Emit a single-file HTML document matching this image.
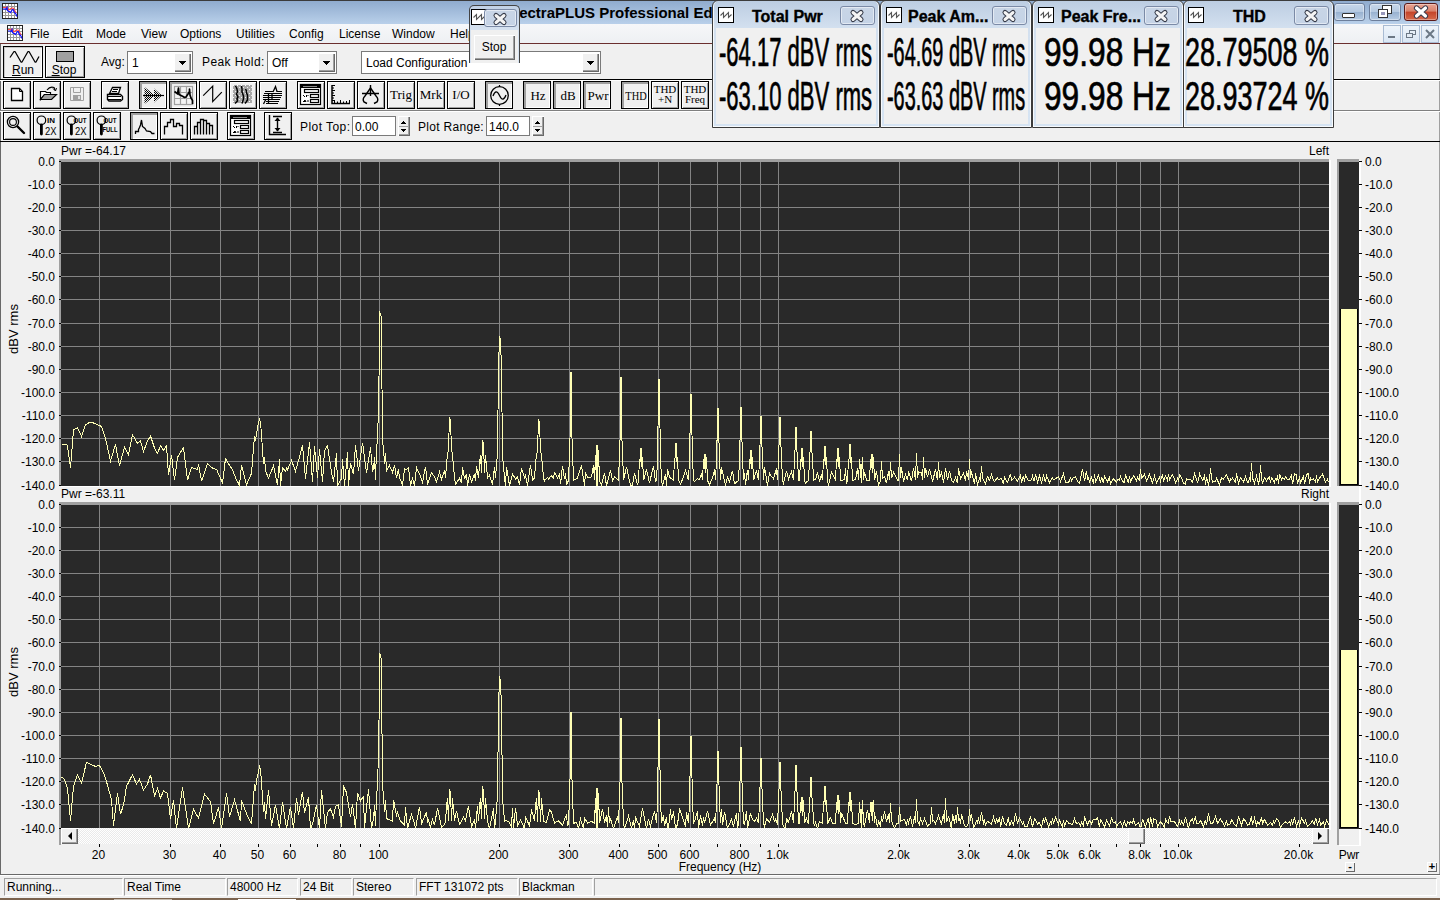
<!DOCTYPE html><html><head><meta charset="utf-8"><style>
*{margin:0;padding:0;box-sizing:border-box}
html,body{width:1440px;height:900px;overflow:hidden;background:#f0f0f0}
body{position:relative;font-family:"Liberation Sans",sans-serif;color:#000}
div{position:absolute}
.t{white-space:nowrap}
svg{position:absolute;left:0;top:0;overflow:visible}
u{text-decoration:underline}
</style></head><body><div style="left:0px;top:0px;width:1440px;height:24px;background:linear-gradient(#8eaacd,#b9d0ea);"></div>
<div style="left:0px;top:0px;width:1440px;height:1px;background:#3b3b3b;"></div>
<div class="t" style="left:500px;top:5.30px;font-size:15px;line-height:15px;font-weight:bold;">SpectraPLUS Professional Edition</div>
<div style="left:0px;top:24px;width:1440px;height:19px;background:linear-gradient(#f6f7f9,#eef0f3);"></div>
<div style="left:0px;top:43px;width:1440px;height:1px;background:#6b2f2f;"></div>
<div class="t" style="left:30px;top:27.84px;font-size:12px;line-height:12px;">File</div>
<div class="t" style="left:62px;top:27.84px;font-size:12px;line-height:12px;">Edit</div>
<div class="t" style="left:96px;top:27.84px;font-size:12px;line-height:12px;">Mode</div>
<div class="t" style="left:141px;top:27.84px;font-size:12px;line-height:12px;">View</div>
<div class="t" style="left:180px;top:27.84px;font-size:12px;line-height:12px;">Options</div>
<div class="t" style="left:236px;top:27.84px;font-size:12px;line-height:12px;">Utilities</div>
<div class="t" style="left:289px;top:27.84px;font-size:12px;line-height:12px;">Config</div>
<div class="t" style="left:339px;top:27.84px;font-size:12px;line-height:12px;">License</div>
<div class="t" style="left:392px;top:27.84px;font-size:12px;line-height:12px;">Window</div>
<div class="t" style="left:450px;top:27.84px;font-size:12px;line-height:12px;">Help</div>
<svg style="left:2px;top:3px" width="16" height="16" viewBox="0 0 16 16"><rect x="0.5" y="0.5" width="15" height="15" fill="#fff" stroke="#222"/><line x1="3.5" y1="1" x2="3.5" y2="15" stroke="#999"/><line x1="1" y1="3.5" x2="15" y2="3.5" stroke="#999"/><line x1="6.5" y1="1" x2="6.5" y2="15" stroke="#999"/><line x1="1" y1="6.5" x2="15" y2="6.5" stroke="#999"/><line x1="9.5" y1="1" x2="9.5" y2="15" stroke="#999"/><line x1="1" y1="9.5" x2="15" y2="9.5" stroke="#999"/><line x1="12.5" y1="1" x2="12.5" y2="15" stroke="#999"/><line x1="1" y1="12.5" x2="15" y2="12.5" stroke="#999"/><polyline points="1,4.5 4,4.5 5,4 6,6 7,7 8,6 10,5 11,5 12,6 13,8 14,10" fill="none" stroke="#f44" stroke-width="1.1"/><polyline points="1,6 3,6 4,6.5 5,4.5 5.5,7.5 6.5,8.5 7.5,8.5 8.5,9.5 9.5,8 10.5,6.5 11.5,7 12,9 13,10 14,11 15,13.5" fill="none" stroke="#11f" stroke-width="1.2"/></svg>
<svg style="left:7px;top:25px" width="16" height="16" viewBox="0 0 16 16"><rect x="0.5" y="0.5" width="15" height="15" fill="#fff" stroke="#222"/><line x1="3.5" y1="1" x2="3.5" y2="15" stroke="#999"/><line x1="1" y1="3.5" x2="15" y2="3.5" stroke="#999"/><line x1="6.5" y1="1" x2="6.5" y2="15" stroke="#999"/><line x1="1" y1="6.5" x2="15" y2="6.5" stroke="#999"/><line x1="9.5" y1="1" x2="9.5" y2="15" stroke="#999"/><line x1="1" y1="9.5" x2="15" y2="9.5" stroke="#999"/><line x1="12.5" y1="1" x2="12.5" y2="15" stroke="#999"/><line x1="1" y1="12.5" x2="15" y2="12.5" stroke="#999"/><polyline points="1,4.5 4,4.5 5,4 6,6 7,7 8,6 10,5 11,5 12,6 13,8 14,10" fill="none" stroke="#f44" stroke-width="1.1"/><polyline points="1,6 3,6 4,6.5 5,4.5 5.5,7.5 6.5,8.5 7.5,8.5 8.5,9.5 9.5,8 10.5,6.5 11.5,7 12,9 13,10 14,11 15,13.5" fill="none" stroke="#11f" stroke-width="1.2"/></svg>
<div style="left:0px;top:44px;width:1px;height:831px;background:#696969;"></div>
<div style="left:1439px;top:44px;width:1px;height:831px;background:#a0a0a0;"></div>
<div style="left:0px;top:79px;width:1440px;height:1px;background:#000;"></div>
<div style="left:0px;top:80px;width:1440px;height:1px;background:#fff;"></div>
<div style="left:0px;top:110px;width:1440px;height:1px;background:#808080;"></div>
<div style="left:0px;top:111px;width:1440px;height:1px;background:#fff;"></div>
<div style="left:0px;top:141px;width:1440px;height:1px;background:#000;"></div>
<div style="left:3px;top:46px;width:40px;height:32px;border:1px solid #000;background:#f0f0f0;box-shadow:inset 1px 1px 0 #fff,inset -1px -1px 0 #a0a0a0"></div>
<div style="left:4px;top:47px;width:38px;height:30px;box-shadow:inset 1px 1px 0 #c8c8c8,inset -1px -1px 0 #fff;background:#f0f0f0"></div>
<div class="t" style="left:-177px;width:400px;text-align:center;top:63.84px;font-size:12px;line-height:12px;"><u>R</u>un</div>
<div style="left:45px;top:46px;width:40px;height:32px;border:1px solid #000;background:#f0f0f0;box-shadow:inset 1px 1px 0 #fff,inset -1px -1px 0 #a0a0a0"></div>
<div style="left:56px;top:51px;width:18px;height:11px;background:#a0a0a0;border:1px solid #000"></div>
<div class="t" style="left:-136px;width:400px;text-align:center;top:63.84px;font-size:12px;line-height:12px;"><u>S</u>top</div>
<div class="t" style="left:101px;top:55.84px;font-size:12px;line-height:12px;">Avg:</div>
<div style="left:127px;top:51px;width:66px;height:23px;background:#fff;border:1px solid #7a7a7a;box-shadow:inset 1px 1px 0 #fff"></div>
<div class="t" style="left:132px;top:56.84px;font-size:12px;line-height:12px;">1</div>
<div style="left:174px;top:53px;width:17px;height:19px;background:#f0f0f0;box-shadow:inset 1px 1px 0 #fff,inset -1px -1px 0 #696969,inset -2px -2px 0 #a0a0a0"></div>
<svg style="left:178px;top:61px" width="8" height="5" viewBox="0 0 8 5" shape-rendering="crispEdges"><polygon points="0,0 8,0 4,4" fill="#000"/></svg>
<div class="t" style="left:202px;top:55.84px;font-size:12px;line-height:12px;letter-spacing:0.4px;">Peak Hold:</div>
<div style="left:267px;top:51px;width:70px;height:23px;background:#fff;border:1px solid #7a7a7a;box-shadow:inset 1px 1px 0 #fff"></div>
<div class="t" style="left:272px;top:56.84px;font-size:12px;line-height:12px;">Off</div>
<div style="left:318px;top:53px;width:17px;height:19px;background:#f0f0f0;box-shadow:inset 1px 1px 0 #fff,inset -1px -1px 0 #696969,inset -2px -2px 0 #a0a0a0"></div>
<svg style="left:322px;top:61px" width="8" height="5" viewBox="0 0 8 5" shape-rendering="crispEdges"><polygon points="0,0 8,0 4,4" fill="#000"/></svg>
<div style="left:361px;top:51px;width:240px;height:23px;background:#fff;border:1px solid #7a7a7a;box-shadow:inset 1px 1px 0 #fff"></div>
<div class="t" style="left:366px;top:56.84px;font-size:12px;line-height:12px;">Load Configuration</div>
<div style="left:582px;top:53px;width:17px;height:19px;background:#f0f0f0;box-shadow:inset 1px 1px 0 #fff,inset -1px -1px 0 #696969,inset -2px -2px 0 #a0a0a0"></div>
<svg style="left:586px;top:61px" width="8" height="5" viewBox="0 0 8 5" shape-rendering="crispEdges"><polygon points="0,0 8,0 4,4" fill="#000"/></svg>
<div style="left:3px;top:81px;width:28px;height:28px;border:1px solid #000;background:#f0f0f0;box-shadow:inset 1px 1px 0 #fff,inset -1px -1px 0 #a0a0a0"></div>
<div style="left:33px;top:81px;width:28px;height:28px;border:1px solid #000;background:#f0f0f0;box-shadow:inset 1px 1px 0 #fff,inset -1px -1px 0 #a0a0a0"></div>
<div style="left:63px;top:81px;width:28px;height:28px;border:1px solid #000;background:#f0f0f0;box-shadow:inset 1px 1px 0 #fff,inset -1px -1px 0 #a0a0a0"></div>
<div style="left:101px;top:81px;width:28px;height:28px;border:1px solid #000;background:#f0f0f0;box-shadow:inset 1px 1px 0 #fff,inset -1px -1px 0 #a0a0a0"></div>
<div style="left:139px;top:81px;width:28px;height:28px;border:1px solid #000;background:#f0f0f0;box-shadow:inset 2px 2px 0 #a0a0a0,inset -1px -1px 0 #fff"></div>
<div style="left:169px;top:81px;width:28px;height:28px;border:1px solid #000;background:#f0f0f0;box-shadow:inset 2px 2px 0 #a0a0a0,inset -1px -1px 0 #fff"></div>
<div style="left:199px;top:81px;width:28px;height:28px;border:1px solid #000;background:#f0f0f0;box-shadow:inset 1px 1px 0 #fff,inset -1px -1px 0 #a0a0a0"></div>
<div style="left:229px;top:81px;width:28px;height:28px;border:1px solid #000;background:#f0f0f0;box-shadow:inset 1px 1px 0 #fff,inset -1px -1px 0 #a0a0a0"></div>
<div style="left:259px;top:81px;width:28px;height:28px;border:1px solid #000;background:#f0f0f0;box-shadow:inset 1px 1px 0 #fff,inset -1px -1px 0 #a0a0a0"></div>
<div style="left:297px;top:81px;width:28px;height:28px;border:1px solid #000;background:#f0f0f0;box-shadow:inset 1px 1px 0 #fff,inset -1px -1px 0 #a0a0a0"></div>
<div style="left:327px;top:81px;width:28px;height:28px;border:1px solid #000;background:#f0f0f0;box-shadow:inset 1px 1px 0 #fff,inset -1px -1px 0 #a0a0a0"></div>
<div style="left:357px;top:81px;width:28px;height:28px;border:1px solid #000;background:#f0f0f0;box-shadow:inset 1px 1px 0 #fff,inset -1px -1px 0 #a0a0a0"></div>
<div style="left:387px;top:81px;width:28px;height:28px;border:1px solid #000;background:#f0f0f0;box-shadow:inset 1px 1px 0 #fff,inset -1px -1px 0 #a0a0a0"></div>
<div class="t" style="left:387px;top:87px;width:28px;text-align:center;font-family:'Liberation Serif', serif;font-size:13px;line-height:15px;">Trig</div>
<div style="left:417px;top:81px;width:28px;height:28px;border:1px solid #000;background:#f0f0f0;box-shadow:inset 1px 1px 0 #fff,inset -1px -1px 0 #a0a0a0"></div>
<div class="t" style="left:417px;top:87px;width:28px;text-align:center;font-family:'Liberation Serif', serif;font-size:13px;line-height:15px;">Mrk</div>
<div style="left:447px;top:81px;width:28px;height:28px;border:1px solid #000;background:#f0f0f0;box-shadow:inset 1px 1px 0 #fff,inset -1px -1px 0 #a0a0a0"></div>
<div class="t" style="left:447px;top:87px;width:28px;text-align:center;font-family:'Liberation Serif', serif;font-size:13px;line-height:15px;">I/O</div>
<div style="left:485px;top:81px;width:28px;height:28px;border:1px solid #000;background:#f0f0f0;box-shadow:inset 2px 2px 0 #a0a0a0,inset -1px -1px 0 #fff"></div>
<div style="left:523px;top:81px;width:28px;height:28px;border:1px solid #000;background:#f0f0f0;box-shadow:inset 2px 2px 0 #a0a0a0,inset -1px -1px 0 #fff"></div>
<div class="t" style="left:524px;top:88px;width:28px;text-align:center;font-family:'Liberation Serif', serif;font-size:13px;line-height:15px;">Hz</div>
<div style="left:553px;top:81px;width:28px;height:28px;border:1px solid #000;background:#f0f0f0;box-shadow:inset 2px 2px 0 #a0a0a0,inset -1px -1px 0 #fff"></div>
<div class="t" style="left:554px;top:88px;width:28px;text-align:center;font-family:'Liberation Serif', serif;font-size:13px;line-height:15px;">dB</div>
<div style="left:583px;top:81px;width:28px;height:28px;border:1px solid #000;background:#f0f0f0;box-shadow:inset 2px 2px 0 #a0a0a0,inset -1px -1px 0 #fff"></div>
<div class="t" style="left:584px;top:88px;width:28px;text-align:center;font-family:'Liberation Serif', serif;font-size:13px;line-height:15px;">Pwr</div>
<div style="left:621px;top:81px;width:28px;height:28px;border:1px solid #000;background:#f0f0f0;box-shadow:inset 2px 2px 0 #a0a0a0,inset -1px -1px 0 #fff"></div>
<div class="t" style="left:622px;top:88px;width:28px;text-align:center;font-family:'Liberation Serif', serif;font-size:13px;line-height:15px;transform:scaleX(0.8);">THD</div>
<div style="left:651px;top:81px;width:28px;height:28px;border:1px solid #000;background:#f0f0f0;box-shadow:inset 1px 1px 0 #fff,inset -1px -1px 0 #a0a0a0"></div>
<div class="t" style="left:651px;top:84px;width:28px;text-align:center;font-family:'Liberation Serif', serif;font-size:11px;line-height:10px;">THD<br>+N</div>
<div style="left:681px;top:81px;width:28px;height:28px;border:1px solid #000;background:#f0f0f0;box-shadow:inset 1px 1px 0 #fff,inset -1px -1px 0 #a0a0a0"></div>
<div class="t" style="left:681px;top:84px;width:28px;text-align:center;font-family:'Liberation Serif', serif;font-size:11px;line-height:10px;">THD<br>Freq</div>
<div style="left:3px;top:112px;width:28px;height:28px;border:1px solid #000;background:#f0f0f0;box-shadow:inset 1px 1px 0 #fff,inset -1px -1px 0 #a0a0a0"></div>
<div style="left:33px;top:112px;width:28px;height:28px;border:1px solid #000;background:#f0f0f0;box-shadow:inset 1px 1px 0 #fff,inset -1px -1px 0 #a0a0a0"></div>
<div style="left:63px;top:112px;width:28px;height:28px;border:1px solid #000;background:#f0f0f0;box-shadow:inset 1px 1px 0 #fff,inset -1px -1px 0 #a0a0a0"></div>
<div style="left:93px;top:112px;width:28px;height:28px;border:1px solid #000;background:#f0f0f0;box-shadow:inset 1px 1px 0 #fff,inset -1px -1px 0 #a0a0a0"></div>
<div style="left:130px;top:112px;width:28px;height:28px;border:1px solid #000;background:#f0f0f0;box-shadow:inset 2px 2px 0 #a0a0a0,inset -1px -1px 0 #fff"></div>
<div style="left:160px;top:112px;width:28px;height:28px;border:1px solid #000;background:#f0f0f0;box-shadow:inset 1px 1px 0 #fff,inset -1px -1px 0 #a0a0a0"></div>
<div style="left:190px;top:112px;width:28px;height:28px;border:1px solid #000;background:#f0f0f0;box-shadow:inset 1px 1px 0 #fff,inset -1px -1px 0 #a0a0a0"></div>
<div style="left:227px;top:112px;width:28px;height:28px;border:1px solid #000;background:#f0f0f0;box-shadow:inset 1px 1px 0 #fff,inset -1px -1px 0 #a0a0a0"></div>
<div style="left:264px;top:112px;width:28px;height:28px;border:1px solid #000;background:#f0f0f0;box-shadow:inset 1px 1px 0 #fff,inset -1px -1px 0 #a0a0a0"></div>
<div class="t" style="left:300px;top:120.84px;font-size:12px;line-height:12px;letter-spacing:0.45px;">Plot Top:</div>
<div style="left:352px;top:116px;width:44px;height:20px;background:#fff;border:1px solid #7a7a7a;"></div>
<div class="t" style="left:355px;top:120.84px;font-size:12px;line-height:12px;">0.00</div>
<div style="left:398px;top:116px;width:12px;height:20px;background:#f0f0f0;box-shadow:inset 1px 1px 0 #fff,inset -1px -1px 0 #696969,inset -2px -2px 0 #a0a0a0"></div>
<div style="left:399px;top:126px;width:10px;height:1px;background:#a0a0a0"></div>
<svg style="left:401px;top:121px" width="5" height="3" shape-rendering="crispEdges"><rect x="2" y="0" width="1" height="1"/><rect x="1" y="1" width="3" height="1"/><rect x="0" y="2" width="5" height="1"/></svg>
<svg style="left:401px;top:129px" width="5" height="3" shape-rendering="crispEdges"><rect x="0" y="0" width="5" height="1"/><rect x="1" y="1" width="3" height="1"/><rect x="2" y="2" width="1" height="1"/></svg>
<div class="t" style="left:418px;top:120.84px;font-size:12px;line-height:12px;letter-spacing:0.3px;">Plot Range:</div>
<div style="left:486px;top:116px;width:44px;height:20px;background:#fff;border:1px solid #7a7a7a;"></div>
<div class="t" style="left:489px;top:120.84px;font-size:12px;line-height:12px;">140.0</div>
<div style="left:532px;top:116px;width:12px;height:20px;background:#f0f0f0;box-shadow:inset 1px 1px 0 #fff,inset -1px -1px 0 #696969,inset -2px -2px 0 #a0a0a0"></div>
<div style="left:533px;top:126px;width:10px;height:1px;background:#a0a0a0"></div>
<svg style="left:535px;top:121px" width="5" height="3" shape-rendering="crispEdges"><rect x="2" y="0" width="1" height="1"/><rect x="1" y="1" width="3" height="1"/><rect x="0" y="2" width="5" height="1"/></svg>
<svg style="left:535px;top:129px" width="5" height="3" shape-rendering="crispEdges"><rect x="0" y="0" width="5" height="1"/><rect x="1" y="1" width="3" height="1"/><rect x="2" y="2" width="1" height="1"/></svg>
<svg style="left:0;top:0" width="720" height="142" viewBox="0 0 720 142"><path d="M10,57.5 L14,51.5 L15,51.5 L21,62 L22,62 L28,51.5 L29,51.5 L35,62 L36,62 L39,56.5" stroke="#000" stroke-width="1.25" fill="none" stroke-linejoin="round"/><path d="M11.5,88.5 H19.5 L22.5,91.5 V100.5 H11.5 Z" stroke="#000" stroke-width="1.3" fill="#fff" /><path d="M19.5,88.5 V91.5 H22.5" stroke="#000" stroke-width="1" fill="none" /><path d="M40.5,91.5 H45.5 L46.5,92.5 H50.5 V94.5 H44.5 L40.5,99.5 Z" stroke="#000" stroke-width="1.2" fill="#fff" /><path d="M44.5,94.5 H56.5 L51.5,99.5 H40.5 Z" stroke="#000" stroke-width="1.2" fill="#a0a0a0" /><path d="M47,90 Q50,86 54,87.5 L55,90" stroke="#000" stroke-width="1.2" fill="none" /><path d="M53,88.5 L55.5,91 L56.5,88" stroke="#000" stroke-width="1" fill="none" /><path d="M70.5,87.5 H83.5 V100.5 H70.5 Z" stroke="#a0a0a0" stroke-width="1" fill="none" /><path d="M73.5,87.5 V92.5 H80.5 V87.5" stroke="#a0a0a0" stroke-width="1" fill="none" /><rect x="73" y="95" width="8" height="5" fill="#a0a0a0"/><rect x="78" y="96" width="2" height="3" fill="#e0e0e0"/><path d="M112.5,87.5 H120.5 L118.5,93.5 H109.5 Z" stroke="#000" stroke-width="1.3" fill="#fff" /><path d="M113,89.5 H118 M112,91.5 H117" stroke="#000" stroke-width="1" fill="none" /><path d="M107.5,94.5 H120.5 L122.5,96.5 V99.5 L120.5,101 H109 L107.5,99.5 Z" stroke="#000" stroke-width="1.4" fill="#fff" /><path d="M108,96.5 H121 M108,99.5 H121" stroke="#000" stroke-width="1.2" fill="none" /><defs><pattern id="chk" width="2" height="2" patternUnits="userSpaceOnUse"><rect width="1" height="1" fill="#000"/><rect x="1" y="1" width="1" height="1" fill="#000"/></pattern><pattern id="dots" width="4" height="4" patternUnits="userSpaceOnUse"><rect width="4" height="4" fill="#a8a8a8"/><rect x="1" y="1" width="1" height="1" fill="#fff"/><rect x="3" y="3" width="1" height="1" fill="#eee"/></pattern></defs><polygon points="144.5,87 155,95.5 144.5,104" fill="url(#chk)"/><polygon points="154,88.5 162,95.5 154,102.5" fill="url(#chk)"/><path d="M143,95.5 H164" stroke="#000" stroke-width="1.2" fill="none" /><rect x="174.5" y="86.5" width="18" height="18" fill="#f4f4f4" stroke="#a0a0a0" stroke-width="1.2"/><path d="M180.5,87 V104 M186.5,87 V104 M175,92.5 H192 M175,98.5 H192" stroke="#a0a0a0" stroke-width="1.2" fill="none" /><path d="M174.5,91.5 L176.5,93 L177.5,94 L178.5,88 L179,94.5 L181,95.5 L183,96.5 L184.5,97.5 L186,97 L188,94 L189.5,91.5 L189.5,89 L190,95 L191,98 L192.5,100.5 L192.5,104" stroke="#000" stroke-width="1.7" fill="none" stroke-linejoin="round"/><path d="M203.2,95.7 L212.7,86.2 V101.6 L221.8,92.1" stroke="#000" stroke-width="1.2" fill="none" /><rect x="233" y="85" width="19" height="18" fill="url(#dots)"/><path d="M235.5,86 L237,89 L237.5,92 L236.5,94 L238,97 L237,98.5 L237.5,101 L235,103.5 M241.5,86 L242,89 L242,92 L243.5,96 L243.5,99 L242,103.5 M245.5,89 L246.5,91 L246.5,93 L247.5,95 L247.5,100 L245,103.5" stroke="#000" stroke-width="1.5" fill="none" /><path d="M265,91.5 H273 M276.5,91.5 H282 M264,93.5 H282 M263,95.5 H282 M263,97.5 H281 M263,99.5 H280 M266,101.5 H279 M266,103.5 H278" stroke="#000" stroke-width="1.2" fill="none" /><path d="M273,92 L275.5,86.5 L277,91.5 M268.5,94 V103 M272,93.5 V100 M263.5,104 L266,99" stroke="#000" stroke-width="1.3" fill="none" /><rect x="300.5" y="84.5" width="20" height="20" fill="#fff" stroke="#000" stroke-width="1.2"/><rect x="301" y="85" width="19" height="3" fill="#000"/><rect x="303" y="86" width="14" height="1" fill="#888"/><rect x="304.5" y="89.5" width="14" height="3" fill="#fff" stroke="#000" stroke-width="1.2"/><rect x="310.5" y="94.5" width="8" height="3" fill="#fff" stroke="#000" stroke-width="1.2"/><rect x="310.5" y="99.5" width="8" height="3" fill="#fff" stroke="#000" stroke-width="1.2"/><path d="M303,95 L305,97 M306.5,95 V97 M308,95 V96 M303,102 L305,100 L306,102 M308,100 V102" stroke="#000" stroke-width="1"/><rect x="230.5" y="115.5" width="20" height="20" fill="#fff" stroke="#000" stroke-width="1.2"/><rect x="231" y="116" width="19" height="3" fill="#000"/><rect x="233" y="117" width="14" height="1" fill="#888"/><rect x="234.5" y="120.5" width="14" height="3" fill="#fff" stroke="#000" stroke-width="1.2"/><rect x="240.5" y="125.5" width="8" height="3" fill="#fff" stroke="#000" stroke-width="1.2"/><rect x="240.5" y="130.5" width="8" height="3" fill="#fff" stroke="#000" stroke-width="1.2"/><path d="M233,126 L235,128 M236.5,126 V128 M238,126 V127 M233,133 L235,131 L236,133 M238,131 V133" stroke="#000" stroke-width="1"/><path d="M332,85 V103.5 H350" stroke="#000" stroke-width="1.5" fill="none" /><path d="M332,85.5 H335 M332,88 H334 M332,90.5 H335 M332,93 H334 M332,95.5 H335 M332,98 H334 M332,100.5 H335" stroke="#000" stroke-width="1" fill="none" /><path d="M334.5,103 V101 M337.5,103 V101.5 M340.5,103 V100 M343.5,103 V101.5 M346.5,103 V101 M349.5,103 V100" stroke="#000" stroke-width="1" fill="none" /><path d="M370.5,85 V96 M362,93.5 H379" stroke="#000" stroke-width="1.4" fill="none" /><path d="M370.5,88 L365,96 Q362,99 364,102 L367,103.5 M370.5,88 L376,96 Q379,99 377,102 L374,103.5" stroke="#000" stroke-width="1.4" fill="none" /><circle cx="499.5" cy="95.5" r="8.8" fill="none" stroke="#000" stroke-width="1.3"/><path d="M499.5,85 V87 M499.5,104 V106" stroke="#000" stroke-width="1.2" fill="none" /><path d="M493,96 Q496,88 499.5,95.5 T506,95" stroke="#000" stroke-width="1.3" fill="none" /><circle cx="13" cy="122" r="5.6" fill="none" stroke="#000" stroke-width="1.3"/><circle cx="13" cy="122" r="3.4" fill="none" stroke="#000" stroke-width="1.1"/><path d="M17.5,126.5 L24,133" stroke="#000" stroke-width="2.4" fill="none" stroke-linecap="round"/><circle cx="41.4" cy="120.3" r="4.3" fill="none" stroke="#000" stroke-width="1.2"/><path d="M41.4,125 V134" stroke="#000" stroke-width="2.8" fill="none" stroke-linecap="round"/><text x="47" y="123" font-family="Liberation Sans" font-weight="bold" font-size="7" textLength="8" lengthAdjust="spacingAndGlyphs">IN</text><text x="45" y="134.6" font-family="Liberation Sans" font-size="11.5" textLength="11.5" lengthAdjust="spacingAndGlyphs">2X</text><circle cx="71.4" cy="120.3" r="4.3" fill="none" stroke="#000" stroke-width="1.2"/><path d="M71.4,125 V134" stroke="#000" stroke-width="2.8" fill="none" stroke-linecap="round"/><text x="73.5" y="123" font-family="Liberation Sans" font-weight="bold" font-size="7" textLength="13" lengthAdjust="spacingAndGlyphs">OUT</text><text x="75" y="134.6" font-family="Liberation Sans" font-size="11.5" textLength="11.5" lengthAdjust="spacingAndGlyphs">2X</text><circle cx="101.4" cy="120.3" r="4.3" fill="none" stroke="#000" stroke-width="1.2"/><path d="M101.4,125 V134" stroke="#000" stroke-width="2.8" fill="none" stroke-linecap="round"/><text x="103.5" y="123" font-family="Liberation Sans" font-weight="bold" font-size="7" textLength="13" lengthAdjust="spacingAndGlyphs">OUT</text><text x="102.5" y="131.8" font-family="Liberation Sans" font-weight="bold" font-size="6.5" textLength="15" lengthAdjust="spacingAndGlyphs">FULL</text><path d="M135.5,134 V131.5 H138.5 V129.5 L139.5,127.5 L140.5,125 L141.5,120 L142.5,126.5 L145,128.5 L146.5,131 L150.5,131.5 L152,133.5 H154.5" stroke="#000" stroke-width="1.3" fill="none" /><path d="M164.5,134.5 V126.5 H167.5 V122.5 H170.5 V119.5 H173.5 V126.5 H176.5 V123.5 H179.5 V125.5 H182.5 V134.5" stroke="#000" stroke-width="1.3" fill="none" /><path d="M194.5,134.5 V126.5 H197.5 V122.5 H200.5 V119.5 H203.5 V120.5 H206.5 V123.5 H209.5 V125.5 H212.5 V134.5 M197.5,134.5 V126.5 M200.5,134.5 V122.5 M203.5,134.5 V120 M206.5,134.5 V120.5 M209.5,134.5 V123.5" stroke="#000" stroke-width="1.3" fill="none" /><path d="M269.5,115 V134.5 H286" stroke="#000" stroke-width="1.4" fill="none" /><path d="M273,116.5 H282 M273,132.5 H282 M277.5,118 V131" stroke="#000" stroke-width="1.4" fill="none" /><polygon points="277.5,117.5 274.5,121 280.5,121" fill="#000"/><polygon points="277.5,131.5 274.5,128 280.5,128" fill="#000"/></svg>
<div style="left:59px;top:159px;width:1270px;height:3px;background:#a0a0a0;"></div>
<div style="left:59px;top:159px;width:2px;height:327px;background:#a0a0a0;"></div>
<div style="left:1329px;top:160px;width:2px;height:326px;background:#fff;"></div>
<div style="left:61px;top:486px;width:1270px;height:1px;background:#fff;"></div>
<div style="left:61px;top:162px;width:1268px;height:324px;background:#292929;"></div>
<svg style="left:61px;top:162px" width="1268" height="324" viewBox="61 162 1268 324"><path d="M99.5,162V486M170.5,162V486M220.5,162V486M258.5,162V486M290.5,162V486M317.5,162V486M340.5,162V486M360.5,162V486M379.5,162V486M499.5,162V486M569.5,162V486M619.5,162V486M658.5,162V486M690.5,162V486M717.5,162V486M740.5,162V486M760.5,162V486M778.5,162V486M899.5,162V486M969.5,162V486M1019.5,162V486M1058.5,162V486M1090.5,162V486M1116.5,162V486M1140.5,162V486M1160.5,162V486M1178.5,162V486M1299.5,162V486M61,184.5H1329M61,207.5H1329M61,230.5H1329M61,253.5H1329M61,276.5H1329M61,299.5H1329M61,323.5H1329M61,346.5H1329M61,369.5H1329M61,392.5H1329M61,415.5H1329M61,438.5H1329M61,461.5H1329" stroke="#848484" stroke-width="1" fill="none" shape-rendering="crispEdges"/><polyline points="61.5,444.0 66.5,444.0 67.5,445.7 70.5,468.1 73.5,429.5 77.5,427.8 81.5,436.4 85.5,424.8 89.5,422.5 92.5,422.5 97.5,424.8 101.5,426.4 105.5,438.7 110.5,460.9 115.5,444.5 119.5,466.0 124.5,447.0 128.5,454.9 132.5,434.8 137.5,443.3 140.5,441.0 143.5,451.4 147.5,441.0 150.5,435.9 154.5,448.0 157.5,453.3 160.5,445.7 163.5,450.3 166.5,445.7 168.5,475.0 171.5,454.9 174.5,480.4 177.5,457.2 183.5,447.6 187.5,480.1 191.5,467.6 197.5,469.6 198.5,463.8 201.5,481.2 207.5,463.7 213.5,468.9 216.5,469.1 222.5,483.0 225.5,458.6 228.5,463.7 232.5,469.6 235.5,477.7 239.5,485.5 241.5,465.1 246.5,484.9 251.5,473.4 253.5,448.0 254.5,436.4 255.5,441.0 256.5,434.1 258.5,422.5 259.5,419.5 260.5,422.5 261.5,434.1 262.5,450.3 263.5,464.2 264.5,457.2 265.5,471.1 268.5,478.0 273.5,465.8 277.5,485.2 279.5,459.2 280.5,485.5 282.5,468.0 285.5,471.3 286.5,468.3 287.5,469.7 291.5,460.5 295.5,471.1 299.5,456.9 302.5,445.0 305.5,478.5 309.5,442.5 312.5,481.7 314.5,446.1 317.5,477.7 319.5,449.4 322.5,481.7 324.5,451.1 327.5,445.7 331.5,472.3 333.5,481.5 336.5,453.2 337.5,485.5 341.5,478.7 342.5,459.5 344.5,485.5 347.5,452.3 348.5,485.5 350.5,463.0 353.5,474.4 355.5,445.1 358.5,470.9 362.5,442.6 366.5,473.0 370.5,447.5 372.5,470.9 373.5,468.8 374.5,457.2 375.5,480.4 376.5,448.0 377.5,441.0 378.5,406.3 379.5,346.1 379.5,311.0 380.5,314.4 381.5,317.9 381.5,334.6 382.5,441.0 383.5,448.0 384.5,464.2 385.5,452.6 386.5,471.1 389.5,465.5 392.5,472.4 394.5,464.8 396.5,478.3 398.5,469.2 399.5,477.8 402.5,484.9 404.5,468.9 406.5,469.3 408.5,467.7 410.5,485.5 412.5,478.4 414.5,485.5 416.5,467.6 419.5,473.7 422.5,482.3 425.5,466.7 427.5,484.8 429.5,478.2 431.5,472.7 434.5,476.6 436.5,481.9 439.5,472.0 441.5,479.2 444.5,470.2 445.5,478.1 446.5,464.2 447.5,454.9 448.5,449.1 449.5,416.7 450.5,421.4 451.5,449.1 452.5,454.9 453.5,466.5 454.5,478.1 455.5,484.3 456.5,482.5 459.5,478.3 461.5,482.6 462.5,467.0 464.5,478.3 466.5,474.7 467.5,485.5 469.5,473.8 471.5,481.9 474.5,474.0 475.5,481.4 476.5,466.0 478.5,478.1 479.5,464.2 480.5,454.9 481.5,472.5 482.5,440.1 483.5,444.7 484.5,472.5 485.5,454.9 486.5,466.5 487.5,478.1 489.5,475.1 492.5,484.9 494.5,467.1 495.5,478.1 496.5,464.2 497.5,454.9 498.5,368.4 499.5,336.0 500.5,340.6 501.5,368.4 502.5,454.9 503.5,466.5 504.5,478.1 505.5,485.5 506.5,466.8 509.5,485.5 512.5,474.1 515.5,479.0 517.5,476.7 519.5,485.3 521.5,468.1 524.5,477.9 525.5,475.6 527.5,485.5 530.5,465.1 532.5,479.9 534.5,478.1 535.5,464.2 536.5,454.9 537.5,451.2 538.5,418.8 539.5,423.4 540.5,451.2 541.5,454.9 542.5,466.5 543.5,478.1 544.5,480.9 547.5,477.4 548.5,478.9 551.5,475.7 553.5,478.3 554.5,472.6 557.5,477.9 559.5,473.9 560.5,484.3 562.5,466.1 564.5,478.8 565.5,473.2 566.5,485.0 568.5,480.4 569.5,454.9 570.5,421.4 570.5,372.8 571.5,372.8 571.5,426.0 572.5,450.3 573.5,480.4 577.5,478.0 581.5,465.5 584.5,485.5 585.5,473.2 587.5,477.4 591.5,477.0 593.5,465.2 594.5,480.4 595.5,454.9 596.5,485.5 596.5,445.7 597.5,445.7 597.5,485.5 598.5,450.3 599.5,480.4 601.5,485.5 604.5,473.1 606.5,485.5 610.5,470.5 612.5,480.8 614.5,476.7 617.5,479.3 618.5,480.4 619.5,454.9 620.5,426.4 620.5,377.8 621.5,377.8 621.5,431.1 622.5,450.3 623.5,480.4 626.5,466.9 630.5,485.5 632.5,485.5 634.5,472.8 637.5,485.0 638.5,480.4 639.5,459.5 640.5,461.9 640.5,448.0 641.5,448.0 641.5,466.5 642.5,457.2 643.5,480.4 646.5,469.4 649.5,483.0 653.5,466.0 655.5,481.2 656.5,480.4 657.5,459.5 658.5,393.1 658.5,379.2 659.5,379.2 659.5,397.8 660.5,457.2 661.5,480.4 662.5,485.5 665.5,474.0 666.5,485.5 667.5,468.9 669.5,477.0 673.5,480.4 674.5,459.5 675.5,457.2 675.5,443.3 676.5,443.3 676.5,461.9 677.5,457.2 678.5,480.4 680.5,483.8 683.5,477.1 685.5,470.3 688.5,480.4 689.5,459.5 690.5,408.6 690.5,394.7 691.5,394.7 691.5,413.3 692.5,457.2 693.5,480.4 694.5,481.8 697.5,478.8 699.5,479.5 701.5,473.3 702.5,480.4 703.5,459.5 704.5,468.8 704.5,454.9 705.5,454.9 705.5,473.4 706.5,457.2 707.5,480.4 709.5,484.6 712.5,478.1 714.5,469.5 715.5,480.4 716.5,459.5 717.5,422.5 717.5,408.6 718.5,408.6 718.5,427.1 719.5,457.2 720.5,480.4 721.5,467.3 725.5,485.5 727.5,477.3 729.5,481.9 732.5,470.7 734.5,483.7 738.5,480.4 739.5,459.5 740.5,421.6 740.5,407.7 741.5,407.7 741.5,426.2 742.5,457.2 743.5,480.4 744.5,473.4 745.5,485.0 747.5,469.7 748.5,480.4 749.5,459.5 750.5,464.2 750.5,450.3 751.5,450.3 751.5,468.8 752.5,457.2 753.5,480.4 756.5,469.9 758.5,480.4 759.5,459.5 760.5,430.6 760.5,416.7 761.5,416.7 761.5,435.2 762.5,457.2 763.5,480.4 764.5,467.2 767.5,485.5 769.5,472.9 771.5,476.5 773.5,478.8 776.5,468.4 777.5,480.4 778.5,459.5 779.5,431.8 779.5,417.9 780.5,417.9 780.5,436.4 781.5,457.2 782.5,480.4 783.5,483.3 786.5,470.7 788.5,479.3 791.5,471.5 793.5,480.4 794.5,459.5 795.5,441.0 795.5,427.1 796.5,427.1 796.5,445.7 797.5,457.2 798.5,480.4 799.5,480.4 800.5,459.5 801.5,461.9 801.5,448.0 802.5,448.0 802.5,466.5 803.5,457.2 804.5,480.4 805.5,482.9 808.5,480.4 809.5,459.5 810.5,445.0 810.5,431.1 811.5,431.1 811.5,449.6 812.5,457.2 813.5,480.4 815.5,479.5 817.5,472.5 819.5,481.6 821.5,474.4 822.5,480.4 823.5,459.5 824.5,460.7 824.5,446.8 825.5,446.8 825.5,465.3 826.5,457.2 827.5,480.4 828.5,485.5 831.5,472.0 835.5,480.4 836.5,459.5 837.5,461.9 837.5,448.0 838.5,448.0 838.5,466.5 839.5,457.2 840.5,480.4 844.5,479.7 845.5,468.5 846.5,483.9 847.5,480.4 848.5,459.5 849.5,458.2 849.5,444.3 850.5,444.3 850.5,462.8 851.5,457.2 852.5,480.4 855.5,479.7 857.5,468.1 858.5,480.4 859.5,459.5 860.5,478.1 860.5,464.2 861.5,464.2 861.5,482.7 862.5,457.2 863.5,480.4 864.5,471.8 866.5,480.4 869.5,480.4 870.5,459.5 871.5,467.9 871.5,454.0 872.5,454.0 872.5,472.5 873.5,457.2 874.5,480.4 876.5,471.0 878.5,485.5 880.5,480.4 881.5,461.2 882.5,478.1 884.5,476.5 886.5,483.0 888.5,471.5 889.5,480.4 890.5,461.9 891.5,478.1 893.5,472.4 895.5,475.5 897.5,480.0 898.5,480.4 899.5,454.0 900.5,478.1 901.5,467.5 903.5,481.8 905.5,474.3 907.5,480.2 908.5,471.4 911.5,481.1 913.5,467.9 915.5,480.4 916.5,452.6 917.5,478.1 918.5,472.0 921.5,472.3 922.5,480.4 923.5,457.2 924.5,478.1 925.5,467.8 927.5,477.2 929.5,468.7 932.5,481.5 935.5,469.5 937.5,480.4 938.5,461.9 939.5,478.1 941.5,472.2 943.5,482.8 945.5,468.3 947.5,480.4 949.5,470.9 951.5,480.7 953.5,482.3 955.5,477.5 957.5,482.9 958.5,468.4 960.5,478.7 963.5,473.3 965.5,481.1 966.5,471.6 967.5,474.3 968.5,480.4 969.5,459.5 970.5,478.1 971.5,471.6 974.5,484.1 975.5,473.5 977.5,484.2 979.5,478.3 980.5,480.4 981.5,466.5 982.5,478.1 985.5,484.2 987.5,476.6 989.5,480.4 991.5,474.5 993.5,480.3 994.5,481.6 997.5,477.8 998.5,479.9 1001.5,478.4 1003.5,484.0 1004.5,477.0 1005.5,479.3 1007.5,482.3 1010.5,474.1 1011.5,480.6 1014.5,477.2 1017.5,481.3 1020.5,475.3 1021.5,482.6 1023.5,475.7 1024.5,481.8 1025.5,475.0 1027.5,478.8 1028.5,480.5 1029.5,480.9 1031.5,479.4 1032.5,476.1 1033.5,480.6 1034.5,480.4 1035.5,474.4 1037.5,482.2 1039.5,475.7 1041.5,482.6 1043.5,475.5 1045.5,482.2 1046.5,475.7 1049.5,482.7 1052.5,477.8 1053.5,479.7 1055.5,478.7 1058.5,476.7 1060.5,481.3 1063.5,473.7 1065.5,482.6 1067.5,482.8 1069.5,481.2 1070.5,477.2 1071.5,481.1 1073.5,477.5 1075.5,476.8 1077.5,481.2 1079.5,483.5 1082.5,468.9 1084.5,481.2 1086.5,470.8 1087.5,478.8 1088.5,477.6 1089.5,481.9 1091.5,477.0 1093.5,483.8 1094.5,473.6 1095.5,482.4 1098.5,475.0 1100.5,483.0 1101.5,477.1 1103.5,482.9 1104.5,476.0 1107.5,481.5 1109.5,477.3 1110.5,483.7 1113.5,478.8 1116.5,481.9 1117.5,479.4 1119.5,480.3 1120.5,476.5 1122.5,481.5 1124.5,482.5 1125.5,474.4 1128.5,483.1 1129.5,476.1 1130.5,481.6 1133.5,475.7 1136.5,480.7 1137.5,476.8 1139.5,480.4 1140.5,468.8 1141.5,478.1 1143.5,476.2 1144.5,474.1 1146.5,481.0 1149.5,474.3 1152.5,482.8 1154.5,475.9 1156.5,482.9 1159.5,477.0 1160.5,480.9 1162.5,474.0 1163.5,481.1 1165.5,476.0 1167.5,480.4 1168.5,474.3 1169.5,480.0 1172.5,474.6 1174.5,479.3 1175.5,483.2 1177.5,478.5 1178.5,481.8 1179.5,474.8 1181.5,478.0 1183.5,483.2 1185.5,484.0 1186.5,478.8 1187.5,479.1 1190.5,479.6 1192.5,481.9 1194.5,473.9 1197.5,482.1 1198.5,480.0 1199.5,473.6 1200.5,475.8 1202.5,479.8 1203.5,478.8 1204.5,474.5 1205.5,484.5 1206.5,477.0 1208.5,484.3 1209.5,480.4 1210.5,467.6 1211.5,478.1 1212.5,482.2 1215.5,481.2 1216.5,478.3 1219.5,484.4 1221.5,478.0 1223.5,479.0 1226.5,474.7 1228.5,479.7 1229.5,482.0 1230.5,479.0 1231.5,479.8 1232.5,478.0 1235.5,482.2 1236.5,473.5 1238.5,483.9 1240.5,477.9 1243.5,482.0 1245.5,476.5 1247.5,482.2 1248.5,482.3 1249.5,478.4 1250.5,480.4 1251.5,463.0 1252.5,478.1 1254.5,483.3 1256.5,475.9 1258.5,483.3 1259.5,480.4 1260.5,465.3 1261.5,478.1 1262.5,482.9 1264.5,477.7 1266.5,480.7 1269.5,476.5 1270.5,482.9 1271.5,477.8 1273.5,480.5 1274.5,482.7 1275.5,477.7 1276.5,481.0 1277.5,475.3 1278.5,483.9 1279.5,473.7 1281.5,479.8 1282.5,477.9 1284.5,479.5 1285.5,476.8 1287.5,479.7 1289.5,479.2 1291.5,474.8 1292.5,484.4 1294.5,473.9 1296.5,474.8 1297.5,484.0 1299.5,477.9 1300.5,482.8 1303.5,476.2 1304.5,483.9 1306.5,474.6 1308.5,473.4 1309.5,483.6 1310.5,477.8 1311.5,479.7 1313.5,479.0 1315.5,482.0 1316.5,475.3 1317.5,481.6 1320.5,476.6 1322.5,474.2 1325.5,481.9 1327.5,479.2 1328.5,482.2" fill="none" stroke="#ffffb4" stroke-width="1" stroke-linejoin="miter" shape-rendering="crispEdges"/></svg>
<div style="left:59px;top:161px;width:2px;height:1px;background:#000;"></div>
<div class="t" style="right:1385px;top:155.84px;font-size:12px;line-height:12px;">0.0</div>
<div style="left:59px;top:184px;width:2px;height:1px;background:#000;"></div>
<div class="t" style="right:1385px;top:178.84px;font-size:12px;line-height:12px;">-10.0</div>
<div style="left:59px;top:207px;width:2px;height:1px;background:#000;"></div>
<div class="t" style="right:1385px;top:201.84px;font-size:12px;line-height:12px;">-20.0</div>
<div style="left:59px;top:230px;width:2px;height:1px;background:#000;"></div>
<div class="t" style="right:1385px;top:224.84px;font-size:12px;line-height:12px;">-30.0</div>
<div style="left:59px;top:253px;width:2px;height:1px;background:#000;"></div>
<div class="t" style="right:1385px;top:247.84px;font-size:12px;line-height:12px;">-40.0</div>
<div style="left:59px;top:276px;width:2px;height:1px;background:#000;"></div>
<div class="t" style="right:1385px;top:270.84px;font-size:12px;line-height:12px;">-50.0</div>
<div style="left:59px;top:299px;width:2px;height:1px;background:#000;"></div>
<div class="t" style="right:1385px;top:293.84px;font-size:12px;line-height:12px;">-60.0</div>
<div style="left:59px;top:323px;width:2px;height:1px;background:#000;"></div>
<div class="t" style="right:1385px;top:317.84px;font-size:12px;line-height:12px;">-70.0</div>
<div style="left:59px;top:346px;width:2px;height:1px;background:#000;"></div>
<div class="t" style="right:1385px;top:340.84px;font-size:12px;line-height:12px;">-80.0</div>
<div style="left:59px;top:369px;width:2px;height:1px;background:#000;"></div>
<div class="t" style="right:1385px;top:363.84px;font-size:12px;line-height:12px;">-90.0</div>
<div style="left:59px;top:392px;width:2px;height:1px;background:#000;"></div>
<div class="t" style="right:1385px;top:386.84px;font-size:12px;line-height:12px;">-100.0</div>
<div style="left:59px;top:415px;width:2px;height:1px;background:#000;"></div>
<div class="t" style="right:1385px;top:409.84px;font-size:12px;line-height:12px;">-110.0</div>
<div style="left:59px;top:438px;width:2px;height:1px;background:#000;"></div>
<div class="t" style="right:1385px;top:432.84px;font-size:12px;line-height:12px;">-120.0</div>
<div style="left:59px;top:461px;width:2px;height:1px;background:#000;"></div>
<div class="t" style="right:1385px;top:455.84px;font-size:12px;line-height:12px;">-130.0</div>
<div style="left:59px;top:485px;width:2px;height:1px;background:#000;"></div>
<div class="t" style="right:1385px;top:479.84px;font-size:12px;line-height:12px;">-140.0</div>
<div class="t" style="left:61px;top:144.84px;font-size:12px;line-height:12px;">Pwr =-64.17</div>
<div class="t" style="right:111px;top:144.84px;font-size:12px;line-height:12px;">Left</div>
<div class="t" style="left:-26.5px;top:321.5px;width:80px;height:14px;text-align:center;font-size:13px;line-height:14px;transform:rotate(-90deg)">dBV rms</div>
<div style="left:1337px;top:159px;width:2px;height:327px;background:#a0a0a0;"></div>
<div style="left:1339px;top:159px;width:20px;height:3px;background:#a0a0a0;"></div>
<div style="left:1339px;top:162px;width:20px;height:324px;background:#292929;"></div>
<div style="left:1340px;top:309px;width:18px;height:176px;background:#ffffbb;border:1px solid #000;border-top:0;"></div>
<div style="left:1359px;top:160px;width:2px;height:343px;background:#fff;"></div>
<div style="left:1359px;top:161px;width:3px;height:1px;background:#000;"></div>
<div class="t" style="left:1365px;top:155.84px;font-size:12px;line-height:12px;">0.0</div>
<div style="left:1359px;top:184px;width:3px;height:1px;background:#000;"></div>
<div class="t" style="left:1365px;top:178.84px;font-size:12px;line-height:12px;">-10.0</div>
<div style="left:1359px;top:207px;width:3px;height:1px;background:#000;"></div>
<div class="t" style="left:1365px;top:201.84px;font-size:12px;line-height:12px;">-20.0</div>
<div style="left:1359px;top:230px;width:3px;height:1px;background:#000;"></div>
<div class="t" style="left:1365px;top:224.84px;font-size:12px;line-height:12px;">-30.0</div>
<div style="left:1359px;top:253px;width:3px;height:1px;background:#000;"></div>
<div class="t" style="left:1365px;top:247.84px;font-size:12px;line-height:12px;">-40.0</div>
<div style="left:1359px;top:276px;width:3px;height:1px;background:#000;"></div>
<div class="t" style="left:1365px;top:270.84px;font-size:12px;line-height:12px;">-50.0</div>
<div style="left:1359px;top:299px;width:3px;height:1px;background:#000;"></div>
<div class="t" style="left:1365px;top:293.84px;font-size:12px;line-height:12px;">-60.0</div>
<div style="left:1359px;top:323px;width:3px;height:1px;background:#000;"></div>
<div class="t" style="left:1365px;top:317.84px;font-size:12px;line-height:12px;">-70.0</div>
<div style="left:1359px;top:346px;width:3px;height:1px;background:#000;"></div>
<div class="t" style="left:1365px;top:340.84px;font-size:12px;line-height:12px;">-80.0</div>
<div style="left:1359px;top:369px;width:3px;height:1px;background:#000;"></div>
<div class="t" style="left:1365px;top:363.84px;font-size:12px;line-height:12px;">-90.0</div>
<div style="left:1359px;top:392px;width:3px;height:1px;background:#000;"></div>
<div class="t" style="left:1365px;top:386.84px;font-size:12px;line-height:12px;">-100.0</div>
<div style="left:1359px;top:415px;width:3px;height:1px;background:#000;"></div>
<div class="t" style="left:1365px;top:409.84px;font-size:12px;line-height:12px;">-110.0</div>
<div style="left:1359px;top:438px;width:3px;height:1px;background:#000;"></div>
<div class="t" style="left:1365px;top:432.84px;font-size:12px;line-height:12px;">-120.0</div>
<div style="left:1359px;top:461px;width:3px;height:1px;background:#000;"></div>
<div class="t" style="left:1365px;top:455.84px;font-size:12px;line-height:12px;">-130.0</div>
<div style="left:1359px;top:485px;width:3px;height:1px;background:#000;"></div>
<div class="t" style="left:1365px;top:479.84px;font-size:12px;line-height:12px;">-140.0</div>
<div style="left:59px;top:502px;width:1270px;height:3px;background:#a0a0a0;"></div>
<div style="left:59px;top:502px;width:2px;height:343px;background:#a0a0a0;"></div>
<div style="left:1329px;top:503px;width:2px;height:326px;background:#fff;"></div>
<div style="left:61px;top:829px;width:1270px;height:1px;background:#fff;"></div>
<div style="left:61px;top:505px;width:1268px;height:324px;background:#292929;"></div>
<svg style="left:61px;top:505px" width="1268" height="324" viewBox="61 505 1268 324"><path d="M99.5,505V829M170.5,505V829M220.5,505V829M258.5,505V829M290.5,505V829M317.5,505V829M340.5,505V829M360.5,505V829M379.5,505V829M499.5,505V829M569.5,505V829M619.5,505V829M658.5,505V829M690.5,505V829M717.5,505V829M740.5,505V829M760.5,505V829M778.5,505V829M899.5,505V829M969.5,505V829M1019.5,505V829M1058.5,505V829M1090.5,505V829M1116.5,505V829M1140.5,505V829M1160.5,505V829M1178.5,505V829M1299.5,505V829M61,527.5H1329M61,550.5H1329M61,573.5H1329M61,596.5H1329M61,619.5H1329M61,642.5H1329M61,666.5H1329M61,689.5H1329M61,712.5H1329M61,735.5H1329M61,758.5H1329M61,781.5H1329M61,804.5H1329" stroke="#848484" stroke-width="1" fill="none" shape-rendering="crispEdges"/><polyline points="61.5,777.1 64.5,779.4 67.5,788.7 70.5,820.6 73.5,786.3 77.5,774.8 81.5,783.1 86.5,762.3 90.5,764.4 95.5,766.4 99.5,765.5 104.5,774.8 108.5,788.7 111.5,799.8 113.5,825.7 117.5,793.3 120.5,814.1 123.5,804.9 126.5,786.3 132.5,774.8 136.5,784.0 139.5,779.4 143.5,790.0 147.5,784.0 150.5,774.8 154.5,795.6 157.5,788.7 160.5,797.9 163.5,791.0 167.5,793.3 170.5,818.7 173.5,800.2 176.5,828.5 182.5,787.4 188.5,828.5 193.5,809.3 198.5,818.0 204.5,794.2 210.5,801.6 213.5,824.0 218.5,807.3 221.5,828.5 226.5,793.2 229.5,816.9 234.5,800.1 240.5,821.2 241.5,800.4 247.5,816.3 251.5,823.4 253.5,797.9 254.5,784.0 255.5,791.0 256.5,779.4 258.5,772.5 259.5,765.1 260.5,770.1 261.5,781.7 262.5,797.9 263.5,811.8 264.5,802.5 265.5,818.7 268.5,790.1 271.5,825.5 275.5,805.1 279.5,828.5 282.5,802.1 286.5,828.5 290.5,806.8 293.5,828.5 296.5,797.8 298.5,814.7 302.5,791.7 304.5,812.7 308.5,797.5 310.5,828.5 312.5,824.2 316.5,804.6 319.5,828.5 321.5,790.2 325.5,828.2 327.5,812.4 330.5,809.0 333.5,817.1 335.5,806.2 338.5,804.9 341.5,826.6 343.5,786.4 346.5,792.5 350.5,817.4 352.5,803.8 355.5,828.5 357.5,792.8 360.5,800.7 363.5,796.6 364.5,828.5 368.5,788.7 371.5,828.5 373.5,818.7 374.5,804.9 375.5,825.7 376.5,795.6 377.5,786.3 378.5,751.6 379.5,689.1 379.5,652.6 380.5,656.0 381.5,659.5 381.5,677.6 382.5,786.3 383.5,795.6 384.5,811.8 385.5,800.2 386.5,818.7 389.5,819.6 392.5,821.1 393.5,799.6 396.5,815.5 397.5,812.7 400.5,821.0 404.5,825.0 405.5,807.3 407.5,828.5 411.5,814.3 414.5,824.0 415.5,828.4 419.5,806.6 421.5,823.6 424.5,816.7 426.5,811.9 427.5,822.5 428.5,820.0 430.5,827.4 432.5,819.5 434.5,825.3 437.5,807.9 441.5,827.7 444.5,824.2 445.5,821.1 446.5,807.2 447.5,797.9 448.5,821.1 449.5,788.7 450.5,793.3 451.5,821.1 452.5,797.9 453.5,809.5 454.5,821.1 456.5,810.7 459.5,824.4 463.5,817.1 465.5,820.5 468.5,806.3 471.5,826.7 474.5,820.1 475.5,828.5 477.5,806.0 478.5,821.1 479.5,807.2 480.5,797.9 481.5,818.7 482.5,786.3 483.5,791.0 484.5,818.7 485.5,797.9 486.5,809.5 487.5,821.1 489.5,828.5 493.5,808.2 494.5,828.5 495.5,821.1 496.5,807.2 497.5,797.9 498.5,708.6 499.5,676.2 500.5,680.8 501.5,708.6 502.5,797.9 503.5,809.5 504.5,821.1 505.5,820.9 508.5,821.1 511.5,826.7 512.5,807.6 513.5,828.5 515.5,808.0 517.5,825.6 520.5,820.0 524.5,828.5 525.5,817.1 529.5,825.6 531.5,809.6 534.5,821.1 535.5,807.2 536.5,797.9 537.5,822.4 538.5,790.0 539.5,794.7 540.5,822.4 541.5,797.9 542.5,809.5 543.5,821.1 544.5,822.0 546.5,822.1 549.5,809.9 551.5,812.1 554.5,823.2 556.5,821.5 558.5,820.9 562.5,825.0 566.5,814.5 567.5,826.2 568.5,823.4 569.5,797.9 570.5,761.3 570.5,712.7 571.5,712.7 571.5,766.0 572.5,793.3 573.5,823.4 576.5,822.2 578.5,828.5 580.5,819.1 583.5,828.5 584.5,818.1 587.5,823.1 591.5,821.2 594.5,823.4 595.5,797.9 596.5,828.5 596.5,788.7 597.5,788.7 597.5,828.5 598.5,793.3 599.5,823.4 602.5,809.0 604.5,822.7 606.5,815.4 607.5,827.4 608.5,807.2 609.5,823.3 610.5,818.5 613.5,828.5 617.5,816.6 618.5,823.4 619.5,797.9 620.5,767.1 620.5,718.5 621.5,718.5 621.5,771.8 622.5,793.3 623.5,823.4 624.5,828.5 628.5,816.1 631.5,827.4 633.5,820.2 634.5,828.5 635.5,817.3 639.5,826.3 642.5,808.0 646.5,828.5 648.5,818.9 650.5,826.3 654.5,810.7 656.5,823.4 657.5,802.5 658.5,733.1 658.5,719.2 659.5,719.2 659.5,737.7 660.5,800.2 661.5,823.4 663.5,815.5 664.5,826.4 666.5,817.3 667.5,828.5 668.5,827.5 670.5,809.3 671.5,820.2 673.5,811.5 675.5,828.5 677.5,824.5 679.5,809.0 681.5,814.0 685.5,826.7 686.5,811.7 688.5,823.4 689.5,802.5 690.5,750.7 690.5,736.8 691.5,736.8 691.5,755.3 692.5,800.2 693.5,823.4 694.5,821.4 697.5,811.5 698.5,828.5 700.5,815.5 702.5,825.8 703.5,817.2 704.5,823.1 707.5,811.0 710.5,825.1 714.5,818.3 715.5,823.4 716.5,802.5 717.5,765.1 717.5,751.2 718.5,751.2 718.5,769.7 719.5,800.2 720.5,823.4 721.5,809.0 722.5,825.3 724.5,811.6 727.5,828.5 731.5,819.3 733.5,826.4 734.5,821.5 736.5,813.1 737.5,828.5 738.5,823.4 739.5,802.5 740.5,760.9 740.5,747.0 741.5,747.0 741.5,765.5 742.5,800.2 743.5,823.4 744.5,824.3 746.5,810.7 747.5,828.5 750.5,813.0 752.5,819.3 754.5,821.5 756.5,817.9 758.5,823.4 759.5,802.5 760.5,772.5 760.5,758.6 761.5,758.6 761.5,777.1 762.5,800.2 763.5,823.4 764.5,826.4 766.5,819.0 769.5,822.1 772.5,814.7 774.5,821.3 775.5,819.4 777.5,823.4 778.5,802.5 779.5,776.2 779.5,762.3 780.5,762.3 780.5,780.8 781.5,800.2 782.5,823.4 783.5,826.1 785.5,828.5 786.5,818.6 788.5,822.3 791.5,811.3 793.5,823.4 794.5,802.5 795.5,779.4 795.5,765.5 796.5,765.5 796.5,784.0 797.5,800.2 798.5,823.4 799.5,823.4 800.5,802.5 801.5,810.9 801.5,797.0 802.5,797.0 802.5,815.5 803.5,800.2 804.5,823.4 806.5,818.3 807.5,821.5 808.5,823.4 809.5,802.5 810.5,791.0 810.5,777.1 811.5,777.1 811.5,795.6 812.5,800.2 813.5,823.4 814.5,825.2 815.5,822.7 817.5,828.5 819.5,821.3 820.5,822.5 822.5,823.4 823.5,802.5 824.5,800.7 824.5,786.8 825.5,786.8 825.5,805.3 826.5,800.2 827.5,823.4 830.5,817.7 832.5,823.1 835.5,823.4 836.5,802.5 837.5,809.5 837.5,795.6 838.5,795.6 838.5,814.1 839.5,800.2 840.5,823.4 841.5,813.0 845.5,823.3 847.5,823.4 848.5,802.5 849.5,806.0 849.5,792.1 850.5,792.1 850.5,810.6 851.5,800.2 852.5,823.4 855.5,824.6 858.5,823.4 859.5,802.5 860.5,823.4 860.5,809.5 861.5,809.5 861.5,828.0 862.5,800.2 863.5,823.4 864.5,825.4 867.5,810.0 869.5,823.4 870.5,802.5 871.5,816.4 871.5,802.5 872.5,802.5 872.5,821.1 873.5,800.2 874.5,823.4 875.5,815.8 877.5,827.4 878.5,820.3 880.5,826.8 881.5,816.0 882.5,821.9 884.5,811.1 886.5,821.5 888.5,814.0 889.5,823.4 890.5,803.2 891.5,821.1 894.5,828.3 896.5,824.0 898.5,823.4 899.5,806.7 900.5,821.1 902.5,820.1 904.5,819.4 906.5,824.8 907.5,819.4 908.5,823.0 910.5,816.4 912.5,826.5 914.5,816.2 915.5,823.4 916.5,799.5 917.5,821.1 919.5,824.5 920.5,818.6 922.5,823.6 924.5,818.4 927.5,826.0 930.5,823.4 931.5,807.2 932.5,821.1 933.5,820.4 935.5,823.6 938.5,815.7 941.5,823.7 943.5,814.3 944.5,823.4 945.5,797.9 946.5,821.1 947.5,820.5 948.5,815.8 951.5,828.5 952.5,814.1 954.5,823.5 955.5,815.5 956.5,823.4 957.5,806.7 958.5,821.1 959.5,817.7 960.5,824.0 961.5,813.7 964.5,825.6 966.5,826.7 968.5,823.4 969.5,809.5 970.5,821.1 971.5,814.2 973.5,827.0 975.5,824.6 976.5,819.9 977.5,823.5 978.5,816.6 979.5,824.4 981.5,811.9 983.5,823.2 984.5,820.3 985.5,825.0 987.5,821.4 988.5,822.0 991.5,823.9 993.5,817.2 995.5,823.9 996.5,818.5 997.5,822.5 998.5,820.7 999.5,816.7 1000.5,827.3 1002.5,816.5 1004.5,823.6 1006.5,825.0 1008.5,817.2 1009.5,825.8 1011.5,820.8 1013.5,824.5 1015.5,813.1 1017.5,823.9 1019.5,817.7 1022.5,824.1 1023.5,821.8 1024.5,826.7 1027.5,826.0 1030.5,816.5 1032.5,827.1 1034.5,818.7 1037.5,824.0 1039.5,822.3 1041.5,827.5 1043.5,818.2 1044.5,823.1 1045.5,817.2 1048.5,826.6 1050.5,822.1 1051.5,824.2 1052.5,818.2 1053.5,824.3 1055.5,816.9 1058.5,824.3 1059.5,820.2 1062.5,827.5 1063.5,819.6 1064.5,826.8 1066.5,820.5 1069.5,823.9 1072.5,824.1 1074.5,818.4 1076.5,823.9 1078.5,822.5 1080.5,825.9 1081.5,822.0 1083.5,825.9 1084.5,816.4 1087.5,824.8 1089.5,820.5 1091.5,823.8 1093.5,819.1 1095.5,819.8 1097.5,818.1 1099.5,826.8 1100.5,819.6 1103.5,824.5 1104.5,827.5 1106.5,819.8 1109.5,826.0 1111.5,818.5 1113.5,822.7 1115.5,821.8 1116.5,826.9 1117.5,824.2 1118.5,823.5 1120.5,821.6 1122.5,826.5 1124.5,821.3 1126.5,827.3 1127.5,821.3 1129.5,823.8 1130.5,821.4 1132.5,823.4 1133.5,819.8 1135.5,825.5 1138.5,822.4 1139.5,826.3 1141.5,826.5 1142.5,818.7 1145.5,826.9 1148.5,817.9 1149.5,827.5 1150.5,816.9 1152.5,826.6 1153.5,818.9 1156.5,820.3 1157.5,827.2 1160.5,821.6 1163.5,825.5 1164.5,827.4 1165.5,819.0 1167.5,822.8 1168.5,823.4 1169.5,815.7 1170.5,821.1 1172.5,821.2 1174.5,821.7 1177.5,826.5 1179.5,820.2 1180.5,825.0 1181.5,821.4 1183.5,825.1 1185.5,816.7 1187.5,825.5 1188.5,827.4 1190.5,820.8 1192.5,819.0 1193.5,822.5 1195.5,816.6 1196.5,823.7 1198.5,823.7 1200.5,820.6 1203.5,826.5 1205.5,819.9 1206.5,825.2 1208.5,813.2 1210.5,823.1 1212.5,823.8 1213.5,821.2 1215.5,816.6 1217.5,823.1 1220.5,819.0 1222.5,822.2 1224.5,826.0 1226.5,821.3 1227.5,825.0 1230.5,823.8 1231.5,819.5 1234.5,824.6 1236.5,826.6 1238.5,817.0 1241.5,825.1 1243.5,819.1 1245.5,820.7 1247.5,825.1 1249.5,824.4 1251.5,816.5 1252.5,824.9 1254.5,818.2 1256.5,825.2 1257.5,822.0 1259.5,824.0 1261.5,817.1 1262.5,823.7 1264.5,819.6 1267.5,825.2 1270.5,822.3 1272.5,825.3 1273.5,821.3 1274.5,823.3 1276.5,818.9 1278.5,820.6 1280.5,827.2 1282.5,824.3 1285.5,822.0 1287.5,823.5 1289.5,821.7 1290.5,824.3 1291.5,819.5 1292.5,824.9 1294.5,817.3 1296.5,826.2 1298.5,820.2 1299.5,826.5 1301.5,817.7 1304.5,823.3 1305.5,820.4 1307.5,826.7 1309.5,824.8 1312.5,820.7 1314.5,824.4 1315.5,817.7 1317.5,824.4 1319.5,819.5 1320.5,825.3 1323.5,822.1 1324.5,826.7 1326.5,820.4 1329.5,825.5" fill="none" stroke="#ffffb4" stroke-width="1" stroke-linejoin="miter" shape-rendering="crispEdges"/></svg>
<div style="left:59px;top:504px;width:2px;height:1px;background:#000;"></div>
<div class="t" style="right:1385px;top:498.84px;font-size:12px;line-height:12px;">0.0</div>
<div style="left:59px;top:527px;width:2px;height:1px;background:#000;"></div>
<div class="t" style="right:1385px;top:521.84px;font-size:12px;line-height:12px;">-10.0</div>
<div style="left:59px;top:550px;width:2px;height:1px;background:#000;"></div>
<div class="t" style="right:1385px;top:544.84px;font-size:12px;line-height:12px;">-20.0</div>
<div style="left:59px;top:573px;width:2px;height:1px;background:#000;"></div>
<div class="t" style="right:1385px;top:567.84px;font-size:12px;line-height:12px;">-30.0</div>
<div style="left:59px;top:596px;width:2px;height:1px;background:#000;"></div>
<div class="t" style="right:1385px;top:590.84px;font-size:12px;line-height:12px;">-40.0</div>
<div style="left:59px;top:619px;width:2px;height:1px;background:#000;"></div>
<div class="t" style="right:1385px;top:613.84px;font-size:12px;line-height:12px;">-50.0</div>
<div style="left:59px;top:642px;width:2px;height:1px;background:#000;"></div>
<div class="t" style="right:1385px;top:636.84px;font-size:12px;line-height:12px;">-60.0</div>
<div style="left:59px;top:666px;width:2px;height:1px;background:#000;"></div>
<div class="t" style="right:1385px;top:660.84px;font-size:12px;line-height:12px;">-70.0</div>
<div style="left:59px;top:689px;width:2px;height:1px;background:#000;"></div>
<div class="t" style="right:1385px;top:683.84px;font-size:12px;line-height:12px;">-80.0</div>
<div style="left:59px;top:712px;width:2px;height:1px;background:#000;"></div>
<div class="t" style="right:1385px;top:706.84px;font-size:12px;line-height:12px;">-90.0</div>
<div style="left:59px;top:735px;width:2px;height:1px;background:#000;"></div>
<div class="t" style="right:1385px;top:729.84px;font-size:12px;line-height:12px;">-100.0</div>
<div style="left:59px;top:758px;width:2px;height:1px;background:#000;"></div>
<div class="t" style="right:1385px;top:752.84px;font-size:12px;line-height:12px;">-110.0</div>
<div style="left:59px;top:781px;width:2px;height:1px;background:#000;"></div>
<div class="t" style="right:1385px;top:775.84px;font-size:12px;line-height:12px;">-120.0</div>
<div style="left:59px;top:804px;width:2px;height:1px;background:#000;"></div>
<div class="t" style="right:1385px;top:798.84px;font-size:12px;line-height:12px;">-130.0</div>
<div style="left:59px;top:828px;width:2px;height:1px;background:#000;"></div>
<div class="t" style="right:1385px;top:822.84px;font-size:12px;line-height:12px;">-140.0</div>
<div class="t" style="left:61px;top:487.84px;font-size:12px;line-height:12px;">Pwr =-63.11</div>
<div class="t" style="right:111px;top:487.84px;font-size:12px;line-height:12px;">Right</div>
<div class="t" style="left:-26.5px;top:664.5px;width:80px;height:14px;text-align:center;font-size:13px;line-height:14px;transform:rotate(-90deg)">dBV rms</div>
<div style="left:1337px;top:502px;width:2px;height:343px;background:#a0a0a0;"></div>
<div style="left:1339px;top:502px;width:20px;height:3px;background:#a0a0a0;"></div>
<div style="left:1339px;top:505px;width:20px;height:324px;background:#292929;"></div>
<div style="left:1340px;top:650px;width:18px;height:178px;background:#ffffbb;border:1px solid #000;border-top:0;"></div>
<div style="left:1359px;top:503px;width:2px;height:342px;background:#fff;"></div>
<div style="left:1359px;top:504px;width:3px;height:1px;background:#000;"></div>
<div class="t" style="left:1365px;top:498.84px;font-size:12px;line-height:12px;">0.0</div>
<div style="left:1359px;top:527px;width:3px;height:1px;background:#000;"></div>
<div class="t" style="left:1365px;top:521.84px;font-size:12px;line-height:12px;">-10.0</div>
<div style="left:1359px;top:550px;width:3px;height:1px;background:#000;"></div>
<div class="t" style="left:1365px;top:544.84px;font-size:12px;line-height:12px;">-20.0</div>
<div style="left:1359px;top:573px;width:3px;height:1px;background:#000;"></div>
<div class="t" style="left:1365px;top:567.84px;font-size:12px;line-height:12px;">-30.0</div>
<div style="left:1359px;top:596px;width:3px;height:1px;background:#000;"></div>
<div class="t" style="left:1365px;top:590.84px;font-size:12px;line-height:12px;">-40.0</div>
<div style="left:1359px;top:619px;width:3px;height:1px;background:#000;"></div>
<div class="t" style="left:1365px;top:613.84px;font-size:12px;line-height:12px;">-50.0</div>
<div style="left:1359px;top:642px;width:3px;height:1px;background:#000;"></div>
<div class="t" style="left:1365px;top:636.84px;font-size:12px;line-height:12px;">-60.0</div>
<div style="left:1359px;top:666px;width:3px;height:1px;background:#000;"></div>
<div class="t" style="left:1365px;top:660.84px;font-size:12px;line-height:12px;">-70.0</div>
<div style="left:1359px;top:689px;width:3px;height:1px;background:#000;"></div>
<div class="t" style="left:1365px;top:683.84px;font-size:12px;line-height:12px;">-80.0</div>
<div style="left:1359px;top:712px;width:3px;height:1px;background:#000;"></div>
<div class="t" style="left:1365px;top:706.84px;font-size:12px;line-height:12px;">-90.0</div>
<div style="left:1359px;top:735px;width:3px;height:1px;background:#000;"></div>
<div class="t" style="left:1365px;top:729.84px;font-size:12px;line-height:12px;">-100.0</div>
<div style="left:1359px;top:758px;width:3px;height:1px;background:#000;"></div>
<div class="t" style="left:1365px;top:752.84px;font-size:12px;line-height:12px;">-110.0</div>
<div style="left:1359px;top:781px;width:3px;height:1px;background:#000;"></div>
<div class="t" style="left:1365px;top:775.84px;font-size:12px;line-height:12px;">-120.0</div>
<div style="left:1359px;top:804px;width:3px;height:1px;background:#000;"></div>
<div class="t" style="left:1365px;top:798.84px;font-size:12px;line-height:12px;">-130.0</div>
<div style="left:1359px;top:828px;width:3px;height:1px;background:#000;"></div>
<div class="t" style="left:1365px;top:822.84px;font-size:12px;line-height:12px;">-140.0</div>
<div style="left:61px;top:828px;width:1268px;height:16px;background:#f4f4f4;background-image:repeating-conic-gradient(#ffffff 0 25%,#eaeaea 0 50%);background-size:2px 2px;"></div>
<div style="left:61px;top:828px;width:17px;height:16px;background:#f0f0f0;box-shadow:inset 1px 1px 0 #fff,inset -1px -1px 0 #696969,inset -2px -2px 0 #a0a0a0"></div>
<svg style="left:67px;top:832px" width="6" height="9"><polygon points="5,0 5,8 1,4" fill="#000"/></svg>
<div style="left:1312px;top:828px;width:17px;height:16px;background:#f0f0f0;box-shadow:inset 1px 1px 0 #fff,inset -1px -1px 0 #696969,inset -2px -2px 0 #a0a0a0"></div>
<svg style="left:1318px;top:832px" width="6" height="9"><polygon points="0,0 0,8 4,4" fill="#000"/></svg>
<div style="left:1128px;top:828px;width:17px;height:16px;background:#f0f0f0;box-shadow:inset 1px 1px 0 #fff,inset -1px -1px 0 #696969,inset -2px -2px 0 #a0a0a0"></div>
<div style="left:99px;top:844px;width:1px;height:3px;background:#000;"></div>
<div style="left:170px;top:844px;width:1px;height:3px;background:#000;"></div>
<div style="left:220px;top:844px;width:1px;height:3px;background:#000;"></div>
<div style="left:258px;top:844px;width:1px;height:3px;background:#000;"></div>
<div style="left:290px;top:844px;width:1px;height:3px;background:#000;"></div>
<div style="left:317px;top:844px;width:1px;height:3px;background:#000;"></div>
<div style="left:340px;top:844px;width:1px;height:3px;background:#000;"></div>
<div style="left:360px;top:844px;width:1px;height:3px;background:#000;"></div>
<div style="left:379px;top:844px;width:1px;height:3px;background:#000;"></div>
<div style="left:499px;top:844px;width:1px;height:3px;background:#000;"></div>
<div style="left:569px;top:844px;width:1px;height:3px;background:#000;"></div>
<div style="left:619px;top:844px;width:1px;height:3px;background:#000;"></div>
<div style="left:658px;top:844px;width:1px;height:3px;background:#000;"></div>
<div style="left:690px;top:844px;width:1px;height:3px;background:#000;"></div>
<div style="left:717px;top:844px;width:1px;height:3px;background:#000;"></div>
<div style="left:740px;top:844px;width:1px;height:3px;background:#000;"></div>
<div style="left:760px;top:844px;width:1px;height:3px;background:#000;"></div>
<div style="left:778px;top:844px;width:1px;height:3px;background:#000;"></div>
<div style="left:899px;top:844px;width:1px;height:3px;background:#000;"></div>
<div style="left:969px;top:844px;width:1px;height:3px;background:#000;"></div>
<div style="left:1019px;top:844px;width:1px;height:3px;background:#000;"></div>
<div style="left:1058px;top:844px;width:1px;height:3px;background:#000;"></div>
<div style="left:1090px;top:844px;width:1px;height:3px;background:#000;"></div>
<div style="left:1116px;top:844px;width:1px;height:3px;background:#000;"></div>
<div style="left:1140px;top:844px;width:1px;height:3px;background:#000;"></div>
<div style="left:1160px;top:844px;width:1px;height:3px;background:#000;"></div>
<div style="left:1178px;top:844px;width:1px;height:3px;background:#000;"></div>
<div style="left:1299px;top:844px;width:1px;height:3px;background:#000;"></div>
<div class="t" style="left:-101.5px;width:400px;text-align:center;top:848.84px;font-size:12px;line-height:12px;">20</div>
<div class="t" style="left:-30.5px;width:400px;text-align:center;top:848.84px;font-size:12px;line-height:12px;">30</div>
<div class="t" style="left:19.5px;width:400px;text-align:center;top:848.84px;font-size:12px;line-height:12px;">40</div>
<div class="t" style="left:57.5px;width:400px;text-align:center;top:848.84px;font-size:12px;line-height:12px;">50</div>
<div class="t" style="left:89.5px;width:400px;text-align:center;top:848.84px;font-size:12px;line-height:12px;">60</div>
<div class="t" style="left:139.5px;width:400px;text-align:center;top:848.84px;font-size:12px;line-height:12px;">80</div>
<div class="t" style="left:178.5px;width:400px;text-align:center;top:848.84px;font-size:12px;line-height:12px;">100</div>
<div class="t" style="left:298.5px;width:400px;text-align:center;top:848.84px;font-size:12px;line-height:12px;">200</div>
<div class="t" style="left:368.5px;width:400px;text-align:center;top:848.84px;font-size:12px;line-height:12px;">300</div>
<div class="t" style="left:418.5px;width:400px;text-align:center;top:848.84px;font-size:12px;line-height:12px;">400</div>
<div class="t" style="left:457.5px;width:400px;text-align:center;top:848.84px;font-size:12px;line-height:12px;">500</div>
<div class="t" style="left:489.5px;width:400px;text-align:center;top:848.84px;font-size:12px;line-height:12px;">600</div>
<div class="t" style="left:539.5px;width:400px;text-align:center;top:848.84px;font-size:12px;line-height:12px;">800</div>
<div class="t" style="left:577.5px;width:400px;text-align:center;top:848.84px;font-size:12px;line-height:12px;">1.0k</div>
<div class="t" style="left:698.5px;width:400px;text-align:center;top:848.84px;font-size:12px;line-height:12px;">2.0k</div>
<div class="t" style="left:768.5px;width:400px;text-align:center;top:848.84px;font-size:12px;line-height:12px;">3.0k</div>
<div class="t" style="left:818.5px;width:400px;text-align:center;top:848.84px;font-size:12px;line-height:12px;">4.0k</div>
<div class="t" style="left:857.5px;width:400px;text-align:center;top:848.84px;font-size:12px;line-height:12px;">5.0k</div>
<div class="t" style="left:889.5px;width:400px;text-align:center;top:848.84px;font-size:12px;line-height:12px;">6.0k</div>
<div class="t" style="left:939.5px;width:400px;text-align:center;top:848.84px;font-size:12px;line-height:12px;">8.0k</div>
<div class="t" style="left:977.5px;width:400px;text-align:center;top:848.84px;font-size:12px;line-height:12px;">10.0k</div>
<div class="t" style="left:1098.5px;width:400px;text-align:center;top:848.84px;font-size:12px;line-height:12px;">20.0k</div>
<div class="t" style="left:520px;width:400px;text-align:center;top:860.84px;font-size:12px;line-height:12px;">Frequency (Hz)</div>
<div style="left:1339px;top:829px;width:20px;height:16px;background:#f0f0f0;"></div>
<div style="left:1339px;top:845px;width:22px;height:1px;background:#fff;"></div>
<div class="t" style="left:1149px;width:400px;text-align:center;top:848.84px;font-size:12px;line-height:12px;">Pwr</div>
<div style="left:1345px;top:862px;width:10px;height:10px;background:#f0f0f0;box-shadow:inset 1px 1px 0 #fff,inset -1px -1px 0 #696969"></div>
<div class="t" style="left:1345px;top:861px;width:10px;text-align:center;font-size:11px;line-height:10px;font-weight:bold">-</div>
<div style="left:1427px;top:862px;width:10px;height:10px;background:#f0f0f0;box-shadow:inset 1px 1px 0 #fff,inset -1px -1px 0 #696969"></div>
<div class="t" style="left:1427px;top:861px;width:10px;text-align:center;font-size:11px;line-height:10px;font-weight:bold">+</div>
<div style="left:0px;top:874px;width:1440px;height:1px;background:#696969;"></div>
<div style="left:0px;top:875px;width:1440px;height:1px;background:#fff;"></div>
<div style="left:4px;top:878px;width:119px;height:18px;border-top:1px solid #a0a0a0;border-left:1px solid #a0a0a0;border-right:1px solid #fff;border-bottom:1px solid #fff;"></div>
<div class="t" style="left:7px;top:880.84px;font-size:12px;line-height:12px;">Running...</div>
<div style="left:124px;top:878px;width:102px;height:18px;border-top:1px solid #a0a0a0;border-left:1px solid #a0a0a0;border-right:1px solid #fff;border-bottom:1px solid #fff;"></div>
<div class="t" style="left:127px;top:880.84px;font-size:12px;line-height:12px;">Real Time</div>
<div style="left:227px;top:878px;width:71px;height:18px;border-top:1px solid #a0a0a0;border-left:1px solid #a0a0a0;border-right:1px solid #fff;border-bottom:1px solid #fff;"></div>
<div class="t" style="left:230px;top:880.84px;font-size:12px;line-height:12px;">48000 Hz</div>
<div style="left:300px;top:878px;width:52px;height:18px;border-top:1px solid #a0a0a0;border-left:1px solid #a0a0a0;border-right:1px solid #fff;border-bottom:1px solid #fff;"></div>
<div class="t" style="left:303px;top:880.84px;font-size:12px;line-height:12px;">24 Bit</div>
<div style="left:353px;top:878px;width:61px;height:18px;border-top:1px solid #a0a0a0;border-left:1px solid #a0a0a0;border-right:1px solid #fff;border-bottom:1px solid #fff;"></div>
<div class="t" style="left:356px;top:880.84px;font-size:12px;line-height:12px;">Stereo</div>
<div style="left:416px;top:878px;width:102px;height:18px;border-top:1px solid #a0a0a0;border-left:1px solid #a0a0a0;border-right:1px solid #fff;border-bottom:1px solid #fff;"></div>
<div class="t" style="left:419px;top:880.84px;font-size:12px;line-height:12px;">FFT 131072 pts</div>
<div style="left:519px;top:878px;width:74px;height:18px;border-top:1px solid #a0a0a0;border-left:1px solid #a0a0a0;border-right:1px solid #fff;border-bottom:1px solid #fff;"></div>
<div class="t" style="left:522px;top:880.84px;font-size:12px;line-height:12px;">Blackman</div>
<div style="left:594px;top:878px;width:843px;height:18px;border-top:1px solid #a0a0a0;border-left:1px solid #a0a0a0;border-right:1px solid #fff;border-bottom:1px solid #fff;"></div>
<div style="left:0px;top:898px;width:1440px;height:2px;background:#7b634e;"></div>
<div style="left:114px;top:899px;width:58px;height:1px;background:#c8beb2;"></div>
<div style="left:238px;top:899px;width:58px;height:1px;background:#fff;"></div>
<div style="left:1334px;top:3px;width:31px;height:18px;border:1px solid #6d7f9c;border-radius:3px;background:linear-gradient(#c7d7ea 0%,#b5c9e1 50%,#99b2d0 52%,#b6cbe3 100%);box-shadow:inset 0 0 0 1px rgba(255,255,255,0.4)"></div>
<div style="left:1369px;top:3px;width:32px;height:18px;border:1px solid #6d7f9c;border-radius:3px;background:linear-gradient(#c7d7ea 0%,#b5c9e1 50%,#99b2d0 52%,#b6cbe3 100%);box-shadow:inset 0 0 0 1px rgba(255,255,255,0.4)"></div>
<div style="left:1342px;top:13px;width:13px;height:5px;background:#fff;border:1px solid #333;border-radius:1px"></div>
<div style="left:1382px;top:5px;width:10px;height:9px;border:1.5px solid #333;background:#fff;box-shadow:inset 0 0 0 2px #fff"></div>
<div style="left:1378px;top:9px;width:10px;height:9px;border:1.5px solid #333;background:#fff;"></div>
<div style="left:1381px;top:12px;width:4px;height:3px;background:#99b;"></div>
<div style="left:1404px;top:3px;width:34px;height:18px;border:1px solid #5a1a1a;border-radius:3px;background:linear-gradient(#e8a493 0%,#d9826c 45%,#c4442a 50%,#d66a4c 100%);box-shadow:inset 0 0 0 1px rgba(255,255,255,0.35)"></div>
<svg style="left:1412.0px;top:4.0px" width="18" height="16" viewBox="-9 -8 18 16"><path d="M-4.5,-4 L4.5,4 M4.5,-4 L-4.5,4" stroke="#3b3b4b" stroke-width="5.2" stroke-linecap="round"/><path d="M-4.5,-4 L4.5,4 M4.5,-4 L-4.5,4" stroke="#fff" stroke-width="3.2" stroke-linecap="round"/></svg>
<div style="left:1383px;top:25px;width:18px;height:18px;border:1px solid #a9bbd3;background:linear-gradient(#eef4fb,#dae6f4)"></div>
<div style="left:1402px;top:25px;width:18px;height:18px;border:1px solid #a9bbd3;background:linear-gradient(#eef4fb,#dae6f4)"></div>
<div style="left:1421px;top:25px;width:18px;height:18px;border:1px solid #a9bbd3;background:linear-gradient(#eef4fb,#dae6f4)"></div>
<div style="left:1388px;top:36px;width:7px;height:2px;background:#6b7785"></div>
<svg style="left:1406px;top:29px" width="10" height="10"><rect x="3.5" y="1.5" width="6" height="4" fill="none" stroke="#6b7785"/><rect x="0.5" y="4.5" width="6" height="4" fill="#e4ecf6" stroke="#6b7785"/></svg>
<svg style="left:1425px;top:29px" width="10" height="10"><path d="M1,1 L9,9 M9,1 L1,9" stroke="#6b7785" stroke-width="2"/></svg>
<div style="left:469px;top:5px;width:51px;height:58px;border:1px solid #444;border-bottom:0;border-radius:5px 5px 0 0;background:linear-gradient(#c2d2e6 0px,#d6e2f0 24px,#d6e2f0 100%)"></div>
<div style="left:471px;top:30px;width:47px;height:33px;background:#f0f0f0"></div>
<div style="left:471px;top:9px;width:16px;height:16px;background:#fff;border:1px solid #000"></div>
<svg style="left:471px;top:9px" width="16" height="16"><path d="M2.5,8.5 L5.5,5.5 V10.5 L10.5,5.5 V10.5 L13.5,7.5" fill="none" stroke="#555" stroke-width="1.1"/></svg>
<div style="left:484px;top:9px;width:33px;height:18px;border:1px solid #7b8aa6;border-radius:3px;background:linear-gradient(#c8d5e6,#c5d3e6);box-shadow:inset 0 0 0 1px rgba(255,255,255,0.5)"></div>
<svg style="left:491.0px;top:10.5px" width="18" height="16" viewBox="-9 -8 18 16"><path d="M-4,-3.5 L4,3.5 M4,-3.5 L-4,3.5" stroke="#353a48" stroke-width="5" stroke-linecap="round"/><path d="M-4,-3.5 L4,3.5 M4,-3.5 L-4,3.5" stroke="#f4f4f4" stroke-width="3" stroke-linecap="round"/></svg>
<div style="left:474px;top:35px;width:41px;height:25px;background:#f0f0f0;box-shadow:inset 1px 1px 0 #fff,inset -1px -1px 0 #696969,inset -2px -2px 0 #a0a0a0"></div>
<div class="t" style="left:294px;width:400px;text-align:center;top:40.84px;font-size:12px;line-height:12px;">Stop</div>
<div style="left:712px;top:0px;width:168px;height:128px;border:1px solid #3c3c3c;border-radius:6px 6px 0 0;background:linear-gradient(#bccde2 0px,#d3e0ef 27px,#d6e4f3 100%);box-shadow:inset 1px 0 0 rgba(255,255,255,0.8),inset -1px 0 0 rgba(255,255,255,0.8),inset 0 -1px 0 rgba(255,255,255,0.8)"></div>
<div style="left:716px;top:28px;width:160px;height:96px;background:#f0f0f0;"></div>
<div style="left:718px;top:7px;width:16px;height:16px;background:#fff;border:1px solid #000"></div>
<svg style="left:718px;top:7px" width="16" height="16"><path d="M2.5,8.5 L5.5,5.5 V10.5 L10.5,5.5 V10.5 L13.5,7.5" fill="none" stroke="#555" stroke-width="1.1"/></svg>
<div style="left:840px;top:6px;width:35px;height:19px;border:1px solid #7b8aa6;border-radius:3px;background:linear-gradient(#c8d5e6,#c5d3e6);box-shadow:inset 0 0 0 1px rgba(255,255,255,0.5)"></div>
<svg style="left:848.0px;top:8.0px" width="18" height="16" viewBox="-9 -8 18 16"><path d="M-4,-3.5 L4,3.5 M4,-3.5 L-4,3.5" stroke="#353a48" stroke-width="5" stroke-linecap="round"/><path d="M-4,-3.5 L4,3.5 M4,-3.5 L-4,3.5" stroke="#f4f4f4" stroke-width="3" stroke-linecap="round"/></svg>
<div class="t" style="left:752px;top:9.46px;font-size:16px;line-height:16px;font-weight:bold;-webkit-text-stroke:0.35px #000;">Total Pwr</div>
<div class="t" style="left:719px;top:32.1px;font-size:40px;line-height:40px;-webkit-text-stroke:0.7px #000;transform:scaleX(0.551);transform-origin:0 0">-64.17 dBV rms</div>
<div class="t" style="left:719px;top:76.1px;font-size:40px;line-height:40px;-webkit-text-stroke:0.7px #000;transform:scaleX(0.551);transform-origin:0 0">-63.10 dBV rms</div>
<div style="left:880px;top:0px;width:152px;height:128px;border:1px solid #3c3c3c;border-radius:6px 6px 0 0;background:linear-gradient(#bccde2 0px,#d3e0ef 27px,#d6e4f3 100%);box-shadow:inset 1px 0 0 rgba(255,255,255,0.8),inset -1px 0 0 rgba(255,255,255,0.8),inset 0 -1px 0 rgba(255,255,255,0.8)"></div>
<div style="left:884px;top:28px;width:144px;height:96px;background:#f0f0f0;"></div>
<div style="left:886px;top:7px;width:16px;height:16px;background:#fff;border:1px solid #000"></div>
<svg style="left:886px;top:7px" width="16" height="16"><path d="M2.5,8.5 L5.5,5.5 V10.5 L10.5,5.5 V10.5 L13.5,7.5" fill="none" stroke="#555" stroke-width="1.1"/></svg>
<div style="left:992px;top:6px;width:35px;height:19px;border:1px solid #7b8aa6;border-radius:3px;background:linear-gradient(#c8d5e6,#c5d3e6);box-shadow:inset 0 0 0 1px rgba(255,255,255,0.5)"></div>
<svg style="left:1000.0px;top:8.0px" width="18" height="16" viewBox="-9 -8 18 16"><path d="M-4,-3.5 L4,3.5 M4,-3.5 L-4,3.5" stroke="#353a48" stroke-width="5" stroke-linecap="round"/><path d="M-4,-3.5 L4,3.5 M4,-3.5 L-4,3.5" stroke="#f4f4f4" stroke-width="3" stroke-linecap="round"/></svg>
<div class="t" style="left:908px;top:9.46px;font-size:16px;line-height:16px;font-weight:bold;-webkit-text-stroke:0.35px #000;">Peak Am...</div>
<div class="t" style="left:887px;top:32.1px;font-size:40px;line-height:40px;-webkit-text-stroke:0.7px #000;transform:scaleX(0.497);transform-origin:0 0">-64.69 dBV rms</div>
<div class="t" style="left:887px;top:76.1px;font-size:40px;line-height:40px;-webkit-text-stroke:0.7px #000;transform:scaleX(0.497);transform-origin:0 0">-63.63 dBV rms</div>
<div style="left:1032px;top:0px;width:152px;height:128px;border:1px solid #3c3c3c;border-radius:6px 6px 0 0;background:linear-gradient(#bccde2 0px,#d3e0ef 27px,#d6e4f3 100%);box-shadow:inset 1px 0 0 rgba(255,255,255,0.8),inset -1px 0 0 rgba(255,255,255,0.8),inset 0 -1px 0 rgba(255,255,255,0.8)"></div>
<div style="left:1036px;top:28px;width:144px;height:96px;background:#f0f0f0;"></div>
<div style="left:1038px;top:7px;width:16px;height:16px;background:#fff;border:1px solid #000"></div>
<svg style="left:1038px;top:7px" width="16" height="16"><path d="M2.5,8.5 L5.5,5.5 V10.5 L10.5,5.5 V10.5 L13.5,7.5" fill="none" stroke="#555" stroke-width="1.1"/></svg>
<div style="left:1144px;top:6px;width:35px;height:19px;border:1px solid #7b8aa6;border-radius:3px;background:linear-gradient(#c8d5e6,#c5d3e6);box-shadow:inset 0 0 0 1px rgba(255,255,255,0.5)"></div>
<svg style="left:1152.0px;top:8.0px" width="18" height="16" viewBox="-9 -8 18 16"><path d="M-4,-3.5 L4,3.5 M4,-3.5 L-4,3.5" stroke="#353a48" stroke-width="5" stroke-linecap="round"/><path d="M-4,-3.5 L4,3.5 M4,-3.5 L-4,3.5" stroke="#f4f4f4" stroke-width="3" stroke-linecap="round"/></svg>
<div class="t" style="left:1061px;top:9.46px;font-size:16px;line-height:16px;font-weight:bold;-webkit-text-stroke:0.35px #000;">Peak Fre...</div>
<div class="t" style="left:1044px;top:32.1px;font-size:40px;line-height:40px;-webkit-text-stroke:0.7px #000;transform:scaleX(0.792);transform-origin:0 0">99.98 Hz</div>
<div class="t" style="left:1044px;top:76.1px;font-size:40px;line-height:40px;-webkit-text-stroke:0.7px #000;transform:scaleX(0.792);transform-origin:0 0">99.98 Hz</div>
<div style="left:1183px;top:0px;width:151px;height:128px;border:1px solid #3c3c3c;border-radius:6px 6px 0 0;background:linear-gradient(#bccde2 0px,#d3e0ef 27px,#d6e4f3 100%);box-shadow:inset 1px 0 0 rgba(255,255,255,0.8),inset -1px 0 0 rgba(255,255,255,0.8),inset 0 -1px 0 rgba(255,255,255,0.8)"></div>
<div style="left:1187px;top:28px;width:143px;height:96px;background:#f0f0f0;"></div>
<div style="left:1188px;top:7px;width:16px;height:16px;background:#fff;border:1px solid #000"></div>
<svg style="left:1188px;top:7px" width="16" height="16"><path d="M2.5,8.5 L5.5,5.5 V10.5 L10.5,5.5 V10.5 L13.5,7.5" fill="none" stroke="#555" stroke-width="1.1"/></svg>
<div style="left:1294px;top:6px;width:35px;height:19px;border:1px solid #7b8aa6;border-radius:3px;background:linear-gradient(#c8d5e6,#c5d3e6);box-shadow:inset 0 0 0 1px rgba(255,255,255,0.5)"></div>
<svg style="left:1302.0px;top:8.0px" width="18" height="16" viewBox="-9 -8 18 16"><path d="M-4,-3.5 L4,3.5 M4,-3.5 L-4,3.5" stroke="#353a48" stroke-width="5" stroke-linecap="round"/><path d="M-4,-3.5 L4,3.5 M4,-3.5 L-4,3.5" stroke="#f4f4f4" stroke-width="3" stroke-linecap="round"/></svg>
<div class="t" style="left:1233px;top:9.46px;font-size:16px;line-height:16px;font-weight:bold;-webkit-text-stroke:0.35px #000;">THD</div>
<div class="t" style="left:1185px;top:32.1px;font-size:40px;line-height:40px;-webkit-text-stroke:0.7px #000;transform:scaleX(0.674);transform-origin:0 0">28.79508 %</div>
<div class="t" style="left:1185px;top:76.1px;font-size:40px;line-height:40px;-webkit-text-stroke:0.7px #000;transform:scaleX(0.674);transform-origin:0 0">28.93724 %</div></body></html>
